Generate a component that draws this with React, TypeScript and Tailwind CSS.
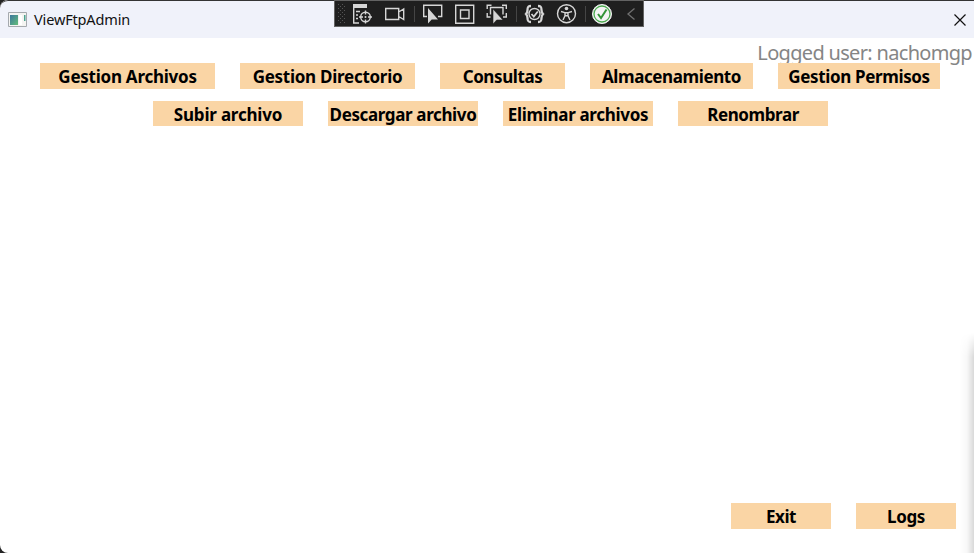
import type { ReactNode } from 'react';

type ButtonProps = { label: string; box: string; text?: string };

function FlatButton({ label, box, text = 'tracking-[-0.4px]' }: ButtonProps) {
  return (
    <button
      className={`flex shrink-0 items-center justify-center overflow-hidden whitespace-nowrap bg-[#fad5a5] pt-0.5 font-['Noto_Sans',sans-serif] text-[17px] font-bold leading-6 text-black ${box}`}
    >
      <span className={text}>{label}</span>
    </button>
  );
}

function Tool({ children, box }: { children: ReactNode; box: string }) {
  return (
    <svg className={`h-[26px] shrink-0 ${box}`} viewBox="0 0 32 26" fill="none" stroke="#d6d6d6" strokeWidth="1.4">
      {children}
    </svg>
  );
}

function DebugToolbar() {
  return (
    <div className="absolute left-[334px] top-0 flex h-[27px] w-[310px] items-start border border-[#636363] bg-[#1f1f1f]">
      <svg className="h-[25px] w-[12px] shrink-0" viewBox="0 0 12 25" fill="#555">
        {[3, 7, 11, 15, 19].map((y) => (
          <g key={y}>
            <path d={`M3 ${y}h1v1h-1zM7 ${y}h1v1h-1zM5 ${y + 2}h1v1h-1zM9 ${y + 2}h1v1h-1z`} />
          </g>
        ))}
      </svg>
      <Tool box="w-8">
        <path d="M6 3h14v4H6z" fill="#d6d6d6" stroke="none" />
        <path d="M6.7 6v16H12M9 10.500h4M9 14h2M9 17.500h2" />
        <circle cx="18.5" cy="16" r="4.8" />
        <path d="M18.5 9.500v4M18.5 18.500v4M12 16h4M21 16h4" />
        <circle cx="18.5" cy="16" r="1" fill="#d6d6d6" stroke="none" />
      </Tool>
      <Tool box="w-8">
        <path d="M6.700 7.500h13v11h-13zM19.700 11l5-3v10.500l-5-3" />
      </Tool>
      <svg className="h-[25px] w-[6px] shrink-0" viewBox="0 0 6 25">
        <path d="M3.500 5v16" stroke="#454545" />
      </svg>
      <Tool box="w-8">
        <path d="M10 15.500H6.700V4.200h18v11.300H21" />
        <path d="M11 7v15.500l3.700-3.900h6.300z" fill="#d6d6d6" stroke="none" />
      </Tool>
      <Tool box="w-8">
        <path d="M6.700 4.200h18v18h-18zM11.500 9h8.500v8.500h-8.500z" />
      </Tool>
      <Tool box="w-8">
        <path d="M6.200 8V4.200h4.300M21 4.200h4.300V8M6.200 12v4h3.300M25.300 12v4H22M9.500 13.500V6.500h12.500v7" />
        <path d="M12 8v15l3.700-4h6.300z" fill="#d6d6d6" stroke="#1f1f1f" strokeWidth=".6" />
      </Tool>
      <svg className="h-[25px] w-[6px] shrink-0" viewBox="0 0 6 25">
        <path d="M3.500 5v16" stroke="#454545" />
      </svg>
      <Tool box="w-8">
        <path d="M12 5c-3 0-3.500 1-3.500 4 0 2-.5 3-1.500 4 1 1 1.500 2 1.500 4 0 3 .5 4 3.500 4M19 5c3 0 3.500 1 3.500 4 0 2 .5 3 1.500 4-1 1-1.500 2-1.500 4 0 3-.5 4-3.500 4" strokeWidth="2.300" />
        <circle cx="15.500" cy="13" r="5.500" />
        <path d="M12.500 13l2.300 2.500 4-5" strokeWidth="1.800" />
      </Tool>
      <Tool box="w-8">
        <circle cx="15.500" cy="12.700" r="9" />
        <circle cx="15.500" cy="7.500" r="1.800" fill="#d6d6d6" stroke="none" />
        <path d="M10 10.500l4 1.200v3L12 19M21 10.500l-4 1.200v3l2 4.300M14 11.700h3M14 14.700h3" />
      </Tool>
      <svg className="h-[25px] w-[5px] shrink-0" viewBox="0 0 5 25">
        <path d="M2.500 5v16" stroke="#454545" />
      </svg>
      <Tool box="w-8">
        <circle cx="14" cy="13" r="9.500" fill="#f4f4f4" stroke="#f4f4f4" strokeWidth="1" />
        <circle cx="14" cy="13" r="8" stroke="#4caa50" strokeWidth="1.300" />
        <path d="M10 13l3 4 5.500-8.500" stroke="#329437" strokeWidth="2" />
      </Tool>
      <svg className="h-[25px] w-6 shrink-0" viewBox="0 0 24 25" fill="none">
        <path d="M14.500 7.500L8 13l6.500 5.500" stroke="#707070" strokeWidth="1.300" />
      </svg>
    </div>
  );
}

function TitleBar() {
  return (
    <header className="flex h-[38px] shrink-0 items-center justify-between rounded-tl-lg border-t border-[#343434] bg-[#f0f2fa] pl-2 pr-2">
      <div className="flex items-center">
        <svg className="h-[15px] w-[19px]" viewBox="0 0 19 15">
          <defs>
            <linearGradient id="app-pane" x1="0" y1="0" x2="1" y2="1">
              <stop stopColor="#3c779d" />
              <stop offset="1" stopColor="#63bd7a" />
            </linearGradient>
          </defs>
          <path d="M.5.500h18v14H.5z" fill="#f4f4f2" stroke="#a5a9ae" />
          <path d="M2 3h8v10H2z" fill="url(#app-pane)" />
          <path d="M11 3h3v10h-3z" fill="#fff" />
          <path d="M16 3h1.500v6H16z" fill="#4da390" />
        </svg>
        <h1 className="mb-0.5 ml-[7px] font-['Noto_Sans',sans-serif] text-[14.500px] leading-5 tracking-[-0.15px] text-[#111]">
          ViewFtpAdmin
        </h1>
      </div>
      <svg className="h-3 w-3" viewBox="0 0 12 12">
        <path d="M.5.500l11 11M11.500.500l-11 11" stroke="#111" strokeWidth="1.200" />
      </svg>
    </header>
  );
}

export default function App() {
  return (
    <div className="relative h-[553px] w-[974px] overflow-hidden bg-[#242424]">
      <main className="flex h-full flex-col overflow-hidden rounded-bl-lg rounded-tl-lg bg-white">
        <TitleBar />
        <div className="flex h-[25px] shrink-0 justify-end overflow-visible pr-[2px]">
          <p className="whitespace-nowrap font-['Noto_Sans',sans-serif] text-[20px] leading-[29px] tracking-[-0.68px] text-[#858585]">
            Logged user: nachomgp
          </p>
        </div>
        <nav className="relative flex shrink-0 gap-[25px] pl-10">
          <FlatButton label="Gestion Archivos" box="h-[26px] w-[175px]" text="tracking-[-0.25px]" />
          <FlatButton label="Gestion Directorio" box="h-[26px] w-[175px]" text="tracking-[-0.27px]" />
          <FlatButton label="Consultas" box="h-[26px] w-[125px]" />
          <FlatButton label="Almacenamiento" box="h-[26px] w-[163px]" />
          <FlatButton label="Gestion Permisos" box="h-[26px] w-[162px]" text="tracking-[-0.35px]" />
        </nav>
        <nav className="mt-3 flex shrink-0 gap-[25px] pl-[153px]">
          <FlatButton label="Subir archivo" box="h-[25px] w-[150px]" text="tracking-[-0.2px]" />
          <FlatButton label="Descargar archivo" box="h-[25px] w-[150px]" text="tracking-[-0.37px]" />
          <FlatButton label="Eliminar archivos" box="h-[25px] w-[150px]" text="tracking-[-0.32px]" />
          <FlatButton label="Renombrar" box="h-[25px] w-[150px]" />
        </nav>
        <footer className="mb-6 mt-auto flex justify-end gap-[25px] pr-[18px]">
          <FlatButton label="Exit" box="h-[26px] w-[100px]" />
          <FlatButton label="Logs" box="h-[26px] w-[100px]" />
        </footer>
      </main>
      <DebugToolbar />
      <div className="pointer-events-none absolute bottom-0 right-0 h-[220px] w-[14px] bg-linear-to-r from-transparent via-black/3 to-black/15 [mask-image:linear-gradient(to_bottom,transparent,black_24px)]" />
    </div>
  );
}
